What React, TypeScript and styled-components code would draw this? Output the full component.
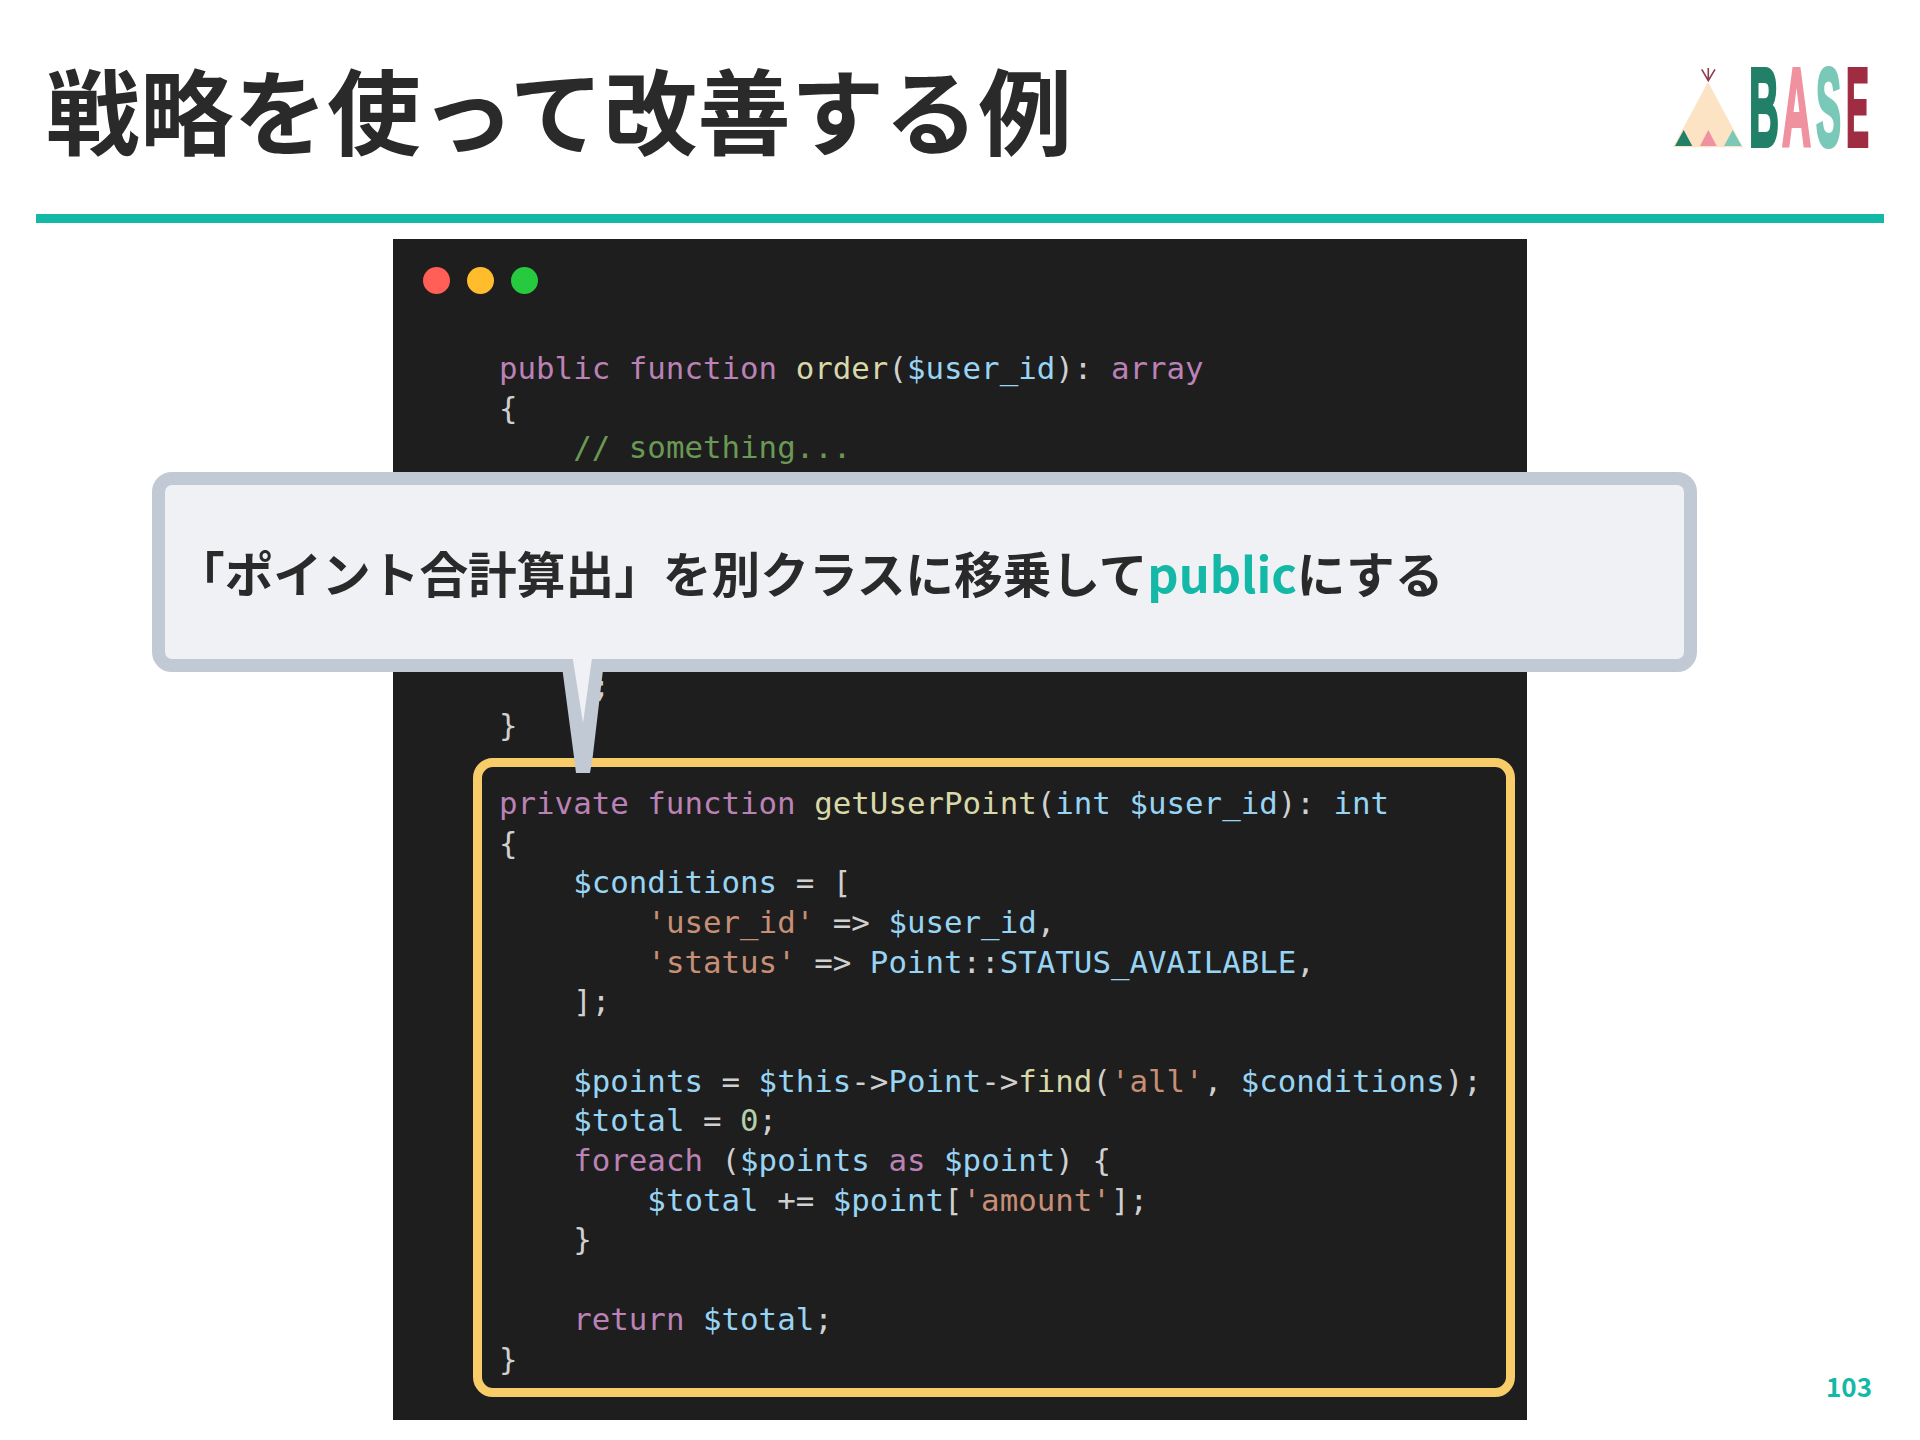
import React from "react";
import styled, { createGlobalStyle } from "styled-components";

const Global = createGlobalStyle`
  html, body { margin: 0; padding: 0; background: #fff; }
`;

const Slide = styled.div`
  position: relative;
  width: 1920px;
  height: 1440px;
  overflow: hidden;
  background: #fff;
  font-family: "Noto Sans CJK JP", "Noto Sans", sans-serif;
`;

const Header = styled.header`
  display: flex;
  align-items: flex-start;
  justify-content: space-between;
  height: 214px;
  padding: 0 0 0 46px;
  box-sizing: border-box;
`;

const Title = styled.h1`
  margin: 45px 0 0;
  font-size: 93.7px;
  line-height: 124px;
  font-weight: 700;
  color: #2a2a2a;
  white-space: nowrap;
`;

const LogoMark = styled.svg`
  display: block;
  width: 250px;
  height: 110px;
  margin-top: 42px;
`;

const Rule = styled.div`
  height: 9px;
  margin: 0 36px;
  background: #14b8a6;
`;

const Stage = styled.main`
  padding: 16px 0 0 393px;
`;

const CodeWindow = styled.section`
  width: 1134px;
  height: 1181px;
  box-sizing: border-box;
  background: #1e1e1e;
  padding: 28px 0 0 106px;
  font-family: "DejaVu Sans Mono", monospace;
  font-size: 30.8px;
  line-height: 39.7px;
  color: #d0d0d0;
`;

const Lights = styled.div`
  display: flex;
  gap: 17px;
  margin: 0 0 55px -76px;
`;

const Light = styled.span<{ $color: string }>`
  width: 27px;
  height: 27px;
  border-radius: 50%;
  background: ${(p) => p.$color};
`;

const Line = styled.div`
  height: 39.7px;
  white-space: pre;
`;

const Highlight = styled.div`
  width: 1042px;
  height: 639px;
  box-sizing: border-box;
  margin: 12px 0 0 -26px;
  padding: 17px 0 0 17px;
  border: 9px solid #f9cc6a;
  border-radius: 20px;
`;

const Tok = styled.span<{ $c: string }>`
  color: ${(p) => p.$c};
`;

const Callout = styled.div`
  position: absolute;
  left: 152px;
  top: 472px;
  width: 1545px;
  height: 200px;
  box-sizing: border-box;
  display: flex;
  align-items: center;
  padding: 0 0 0 11px;
  background: #eff1f5;
  border: 13px solid #c1c9d5;
  border-radius: 20px;
  font-size: 48.7px;
  font-weight: 700;
  color: #2a2a2a;
  white-space: nowrap;
`;

const Accent = styled.span`
  color: #14b8a6;
`;

const CalloutTail = styled.svg`
  position: absolute;
  left: 560px;
  top: 658px;
  width: 48px;
  height: 116px;
`;

const PageNumber = styled.div`
  position: absolute;
  right: 48px;
  top: 1368px;
  font-size: 26px;
  line-height: 36px;
  font-weight: 700;
  color: #14b8a6;
`;

const LogoLetter = styled.text<{ $color: string }>`
  font-family: "Liberation Sans", sans-serif;
  font-weight: 700;
  font-size: 112px;
  fill: ${(p) => p.$color};
  stroke: ${(p) => p.$color};
  stroke-width: 4px;
  stroke-linejoin: miter;
`;

const K = "#bb82b6";
const F = "#d8d8a8";
const V = "#98d4f4";
const S = "#c78f76";
const C = "#6a9955";
const N = "#b5cea8";

export default function App() {
  return (
    <Slide>
      <Global />
      <Header>
        <Title>戦略を使って改善する例</Title>
        <LogoMark viewBox="1670 42 250 110">
          <polygon points="1708,82 1743,147.3 1673,147.3" fill="#fbe3c3" />
          <polygon points="1683.7,130 1692.3,146 1675,146" fill="#228068" />
          <polygon points="1708.3,130 1716.7,146 1700,146" fill="#f0919f" />
          <polygon points="1732.7,130 1741.7,146 1724,146" fill="#79c8b8" />
          <path d="M1701.7 69.3 L1708.3 80.7 L1715 69.3 M1708.3 68 V80.7" stroke="#8f3a50" strokeWidth="1.6" fill="none" />
          <LogoLetter $color="#228068" x="1749" y="146.3" textLength="30" lengthAdjust="spacingAndGlyphs">B</LogoLetter>
          <LogoLetter $color="#f0919f" x="1782" y="146.3" textLength="29" lengthAdjust="spacingAndGlyphs">A</LogoLetter>
          <LogoLetter $color="#79c8b8" x="1816" y="146.3" textLength="25" lengthAdjust="spacingAndGlyphs">S</LogoLetter>
          <LogoLetter $color="#a02c42" x="1846" y="146.3" textLength="23" lengthAdjust="spacingAndGlyphs">E</LogoLetter>
        </LogoMark>
      </Header>
      <Rule />
      <Stage>
        <CodeWindow>
          <Lights>
            <Light $color="#ff5f56" />
            <Light $color="#ffbd2e" />
            <Light $color="#27c93f" />
          </Lights>
          <Line><Tok $c={K}>public function</Tok> <Tok $c={F}>order</Tok>(<Tok $c={V}>$user_id</Tok>): <Tok $c={K}>array</Tok></Line>
          <Line>{"{"}</Line>
          <Line>{"    "}<Tok $c={C}>// something...</Tok></Line>
          <Line />
          <Line>{"    "}<Tok $c={V}>$point</Tok> = <Tok $c={V}>$this</Tok>-&gt;<Tok $c={F}>getUserPoint</Tok>(<Tok $c={V}>$user_id</Tok>);</Line>
          <Line />
          <Line>{"    "}<Tok $c={K}>return</Tok> [</Line>
          <Line>{"        "}<Tok $c={S}>'point'</Tok> =&gt; <Tok $c={V}>$point</Tok>,</Line>
          <Line>{"    "}];</Line>
          <Line>{"}"}</Line>
          <Highlight>
            <Line><Tok $c={K}>private function</Tok> <Tok $c={F}>getUserPoint</Tok>(<Tok $c={V}>int $user_id</Tok>): <Tok $c={V}>int</Tok></Line>
            <Line>{"{"}</Line>
            <Line>{"    "}<Tok $c={V}>$conditions</Tok> = [</Line>
            <Line>{"        "}<Tok $c={S}>'user_id'</Tok> =&gt; <Tok $c={V}>$user_id</Tok>,</Line>
            <Line>{"        "}<Tok $c={S}>'status'</Tok> =&gt; <Tok $c={V}>Point</Tok>::<Tok $c={V}>STATUS_AVAILABLE</Tok>,</Line>
            <Line>{"    "}];</Line>
            <Line />
            <Line>{"    "}<Tok $c={V}>$points</Tok> = <Tok $c={V}>$this</Tok>-&gt;<Tok $c={V}>Point</Tok>-&gt;<Tok $c={F}>find</Tok>(<Tok $c={S}>'all'</Tok>, <Tok $c={V}>$conditions</Tok>);</Line>
            <Line>{"    "}<Tok $c={V}>$total</Tok> = <Tok $c={N}>0</Tok>;</Line>
            <Line>{"    "}<Tok $c={K}>foreach</Tok> (<Tok $c={V}>$points</Tok> <Tok $c={K}>as</Tok> <Tok $c={V}>$point</Tok>) {"{"}</Line>
            <Line>{"        "}<Tok $c={V}>$total</Tok> += <Tok $c={V}>$point</Tok>[<Tok $c={S}>'amount'</Tok>];</Line>
            <Line>{"    }"}</Line>
            <Line />
            <Line>{"    "}<Tok $c={K}>return</Tok> <Tok $c={V}>$total</Tok>;</Line>
            <Line>{"}"}</Line>
          </Highlight>
        </CodeWindow>
      </Stage>
      <Callout>
        <span>「ポイント合計算出」を別クラスに移乗して<Accent>public</Accent>にする</span>
      </Callout>
      <CalloutTail viewBox="0 0 48 116">
        <polygon points="1,1 44.3,1 32.7,99 30,115 16,115 14,99" fill="#c1c9d5" />
        <polygon points="12.7,0 32,0 23,65" fill="#eff1f5" />
      </CalloutTail>
      <PageNumber>103</PageNumber>
    </Slide>
  );
}
